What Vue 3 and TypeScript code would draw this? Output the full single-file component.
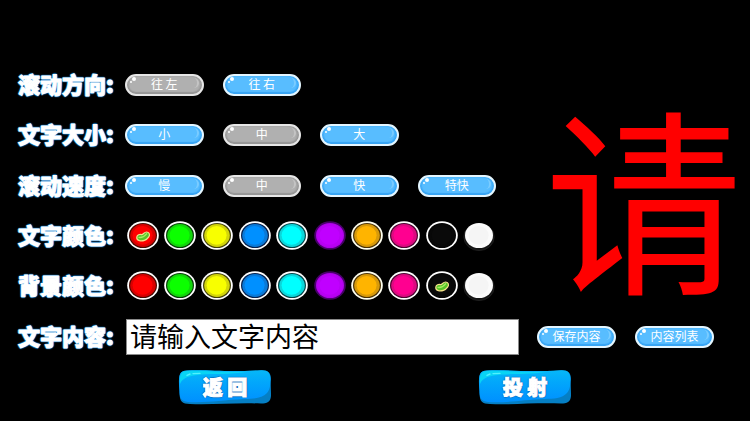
<script setup lang="ts">
import { computed, reactive, ref } from 'vue'

type SettingKey = 'direction' | 'size' | 'speed'
type ColorKey = 'textColor' | 'backColor'

interface Swatch {
  name: string
  core: string
  rim: string
  line: string
  ring: string
}

const settings: { key: SettingKey; label: string; options: string[] }[] = [
  { key: 'direction', label: '滚动方向', options: ['往 左', '往 右'] },
  { key: 'size', label: '文字大小', options: ['小', '中', '大'] },
  { key: 'speed', label: '滚动速度', options: ['慢', '中', '快', '特快'] },
]

const colorRows: { key: ColorKey; label: string }[] = [
  { key: 'textColor', label: '文字颜色' },
  { key: 'backColor', label: '背景颜色' },
]

const swatches: Swatch[] = [
  { name: '红', core: '#ff0000', rim: '#d80000', line: '#4a0a00', ring: '#ffffff' },
  { name: '绿', core: '#0cff00', rim: '#12d60c', line: '#063c06', ring: '#ffffff' },
  { name: '黄', core: '#f8ff00', rim: '#d3d60a', line: '#45420a', ring: '#ffffff' },
  { name: '蓝', core: '#0090ff', rim: '#0a7ad8', line: '#06204c', ring: '#ffffff' },
  { name: '青', core: '#00ffff', rim: '#0cd6da', line: '#06464a', ring: '#ffffff' },
  { name: '紫', core: '#c000ff', rim: '#b800f4', line: '#b000ea', ring: '#48006a' },
  { name: '橙', core: '#ffb400', rim: '#d89a0a', line: '#4a3206', ring: '#fffff0' },
  { name: '粉', core: '#ff0090', rim: '#dc0a80', line: '#4c0630', ring: '#ffffff' },
  { name: '黑', core: '#0a0a0a', rim: '#080808', line: '#060606', ring: '#ffffff' },
  { name: '白', core: '#f5f5f5', rim: '#fbfbfb', line: '#fbfbfb', ring: '#0c0c0c' },
]

const picked = reactive<Record<SettingKey, number>>({ direction: 0, size: 1, speed: 1 })
const colors = reactive<Record<ColorKey, number>>({ textColor: 0, backColor: 8 })
const content = ref('请输入文字内容')

const firstGlyph = computed(() => Array.from(content.value)[0] ?? '')
const glyphColor = computed(() => swatches[colors.textColor].core)
</script>

<template>
  <main class="board">
    <template v-for="row in settings" :key="row.key">
      <span :id="row.key" class="label">{{ row.label }}:</span>
      <div class="options" role="group" :aria-labelledby="row.key">
        <button
          v-for="(option, i) in row.options"
          :key="option"
          type="button"
          class="pill"
          :class="{ chosen: picked[row.key] === i }"
          :aria-pressed="picked[row.key] === i"
          @click="picked[row.key] = i"
        >{{ option }}</button>
      </div>
    </template>

    <template v-for="row in colorRows" :key="row.key">
      <span :id="row.key" class="label">{{ row.label }}:</span>
      <div class="swatches" role="group" :aria-labelledby="row.key">
        <button
          v-for="(s, i) in swatches"
          :key="s.name"
          type="button"
          class="swatch"
          :aria-label="s.name"
          :aria-pressed="colors[row.key] === i"
          @click="colors[row.key] = i"
        >
          <svg width="36" height="32" viewBox="0 0 36 32" aria-hidden="true">
            <ellipse v-if="s.name === '白'" cx="18" cy="17" rx="15.2" ry="13.6" fill="#151515" stroke="#2c2c2c" stroke-width=".6" />
            <ellipse v-else cx="18" cy="15.5" rx="15.8" ry="14.3" :fill="s.ring" />
            <ellipse cx="18" cy="15.5" rx="14" ry="12.6" :fill="s.line" />
            <ellipse cx="18" cy="15.5" rx="12.8" ry="11.4" :fill="s.rim" />
            <ellipse cx="17.6" cy="15.3" rx="10" ry="9.4" :fill="s.core" />
            <g v-if="colors[row.key] === i">
              <path
                d="M11.8 17.2C12.2 14.6 14.6 14.2 16.4 14.6C18.2 15 19 11.8 21.8 12C24.6 12.2 25.2 15 23.6 17.2C21.6 20.2 17.6 21.6 14.4 20.6C12.4 20 11.6 18.8 11.8 17.2Z"
                fill="#56c428" stroke="#f4e08a" stroke-width="1.2"
              />
              <path d="M14 17.4C16.6 17.8 19.4 16.4 21.6 13.8" fill="none" stroke="#a8ec60" stroke-width="1.3" stroke-linecap="round" />
            </g>
          </svg>
        </button>
      </div>
    </template>

    <label class="label" for="content">文字内容:</label>
    <input id="content" v-model="content" class="entry" type="text" />
    <div class="store">
      <button type="button" class="pill">保存内容</button>
      <button type="button" class="pill">内容列表</button>
    </div>

    <div class="preview" :style="{ color: glyphColor }">{{ firstGlyph }}</div>

    <div class="actions">
      <button v-for="name in ['返 回', '投 射']" :key="name" type="button" class="jelly">
        <svg class="jelly-shape" viewBox="0 0 94 36" preserveAspectRatio="none" aria-hidden="true">
          <defs>
            <linearGradient id="jelly-fill" x1="0" y1="0" x2="0" y2="1">
              <stop offset="0" stop-color="#06b8f8" />
              <stop offset=".35" stop-color="#02a8fb" />
              <stop offset="1" stop-color="#0090ff" />
            </linearGradient>
          </defs>
          <path d="M9 1.5C30 .4 48 3.4 83 1.2C90 .8 93 4 93 10C92.4 16 93.2 22 93 27C92.6 33 89 34.5 83 34.6C60 33.4 34 36 12 35C4 35 2 32 1.6 26C1.6 20 .6 16 1 10C1.4 4 3.4 1.8 9 1.5Z" fill="#057fc4" />
          <path d="M9 1.5C30 .4 48 3.4 83 1.2C90 .8 92.4 4 92.4 10C91.8 16 93 19 89 24C84 29.6 76 29.6 66 30C44 31 30 34 10 33C3 32 2 29 1.6 24C1.6 19 .8 16 1.2 10C1.6 4 3.4 1.8 9 1.5Z" fill="url(#jelly-fill)" />
          <path d="M2 15C1.2 6 3.4 2.2 9 2C28 1 44 4 70 2.8C50 6 36 4.4 24 5.6C12 6.8 5 8 2 15Z" fill="#08d4f4" />
          <path d="M9 6.4L12 5M15 4.6L22 4.4" stroke="#50f0ff" stroke-width="1.4" stroke-linecap="round" />
        </svg>
        <span class="jelly-text">{{ name }}</span>
      </button>
    </div>
  </main>
</template>

<style>
body {
  margin: 0;
  background: #000;
}
</style>

<style scoped>
.board {
  box-sizing: border-box;
  display: grid;
  grid-template-columns: 106px minmax(0, 1fr) 231px;
  grid-template-rows: repeat(7, minmax(50px, 1fr));
  align-items: center;
  min-height: 100vh;
  padding: 60px 0 9px 18px;
  background: #000;
  font-family: "Noto Sans CJK SC", sans-serif;
}

button {
  margin: 0;
  padding: 0;
  border: 0;
  background: none;
  font-family: inherit;
  cursor: pointer;
}

.label,
.jelly-text {
  color: #fff;
  font-weight: 900;
  white-space: nowrap;
  -webkit-text-stroke: 1px #fff;
}

.label {
  grid-column: 1;
  padding-bottom: 4px;
  font-size: 22px;
  line-height: 24px;
  text-shadow: 1px 0 1px #1c86d8, -1px 0 1px #1c86d8, 0 1px 1px #1c86d8, 0 -1px 1px #1c86d8, 0 0 2px #1c86d8, 0 0 2px #1c86d8;
}

.options {
  grid-column: 2;
  display: grid;
  grid-template-columns: repeat(4, 1fr);
  gap: 19px;
  padding: 0 23px 0 1px;
}

.pill {
  position: relative;
  box-sizing: border-box;
  height: 22px;
  padding-bottom: 2px;
  border: 2px solid #e4f6ff;
  border-radius: 11px;
  background: #58bdff;
  box-shadow: inset 0 -2px 1px #37a4f4, inset -2px 0 2px #3caaf8, inset 2px 0 1px #45aef8;
  color: #fff;
  font-size: 12px;
  font-weight: 400;
  line-height: 16px;
  white-space: nowrap;
}

.pill::before {
  content: "";
  position: absolute;
  top: 1px;
  left: 5px;
  width: 4px;
  height: 4px;
  border-radius: 50%;
  background: #fff;
  box-shadow: -3px 3px 0 -1px #fff;
}

.pill::after {
  content: "";
  position: absolute;
  top: 2px;
  right: 3px;
  width: 7px;
  height: 10px;
  border-right: 2px solid #7accff;
  border-radius: 0 8px 8px 0;
}

.pill.chosen {
  border-color: #e6e6e6;
  background: #b0b0b0;
  box-shadow: inset 0 -2px 1px #969696, inset -2px 0 2px #9c9c9c, inset 2px 0 1px #a0a0a0;
}

.pill.chosen::after {
  border-color: #c4c4c4;
}

.swatches {
  grid-column: 2;
  display: grid;
  grid-template-columns: repeat(10, 1fr);
  justify-items: center;
  padding-right: 21px;
}

.swatch,
.swatch svg {
  display: block;
}

.entry {
  grid-column: 2;
  box-sizing: border-box;
  height: 36px;
  margin-left: 2px;
  padding: 0 3px 2px;
  border: 1px solid #8a8a8a;
  border-radius: 0;
  outline: 0;
  background: #fff;
  color: #000;
  font-family: inherit;
  font-size: 27px;
}

.store {
  grid-column: 3;
  grid-row: 6;
  display: grid;
  grid-template-columns: 1fr 1fr;
  gap: 19px;
  padding: 0 36px 0 18px;
}

.preview {
  grid-column: 3;
  grid-row: 1 / 7;
  align-self: center;
  padding-left: 18px;
  font-family: "Liberation Sans", "Noto Sans CJK SC", sans-serif;
  font-size: 198px;
  line-height: 230px;
  text-align: center;
  pointer-events: none;
}

.actions {
  grid-column: 1 / 4;
  grid-row: 7;
  display: grid;
  grid-template-columns: 1fr 1fr;
  justify-items: center;
  padding: 0 75px 0 57px;
}

.jelly {
  position: relative;
  width: 94px;
  height: 36px;
}

.jelly-shape {
  position: absolute;
  inset: 0;
  width: 100%;
  height: 100%;
}

.jelly-text {
  position: relative;
  font-size: 20px;
  line-height: 34px;
  text-shadow: 1px 0 1px #0a62b4, -1px 0 1px #0a62b4, 0 1px 1px #0a62b4, 0 -1px 1px #0a62b4;
}
</style>
